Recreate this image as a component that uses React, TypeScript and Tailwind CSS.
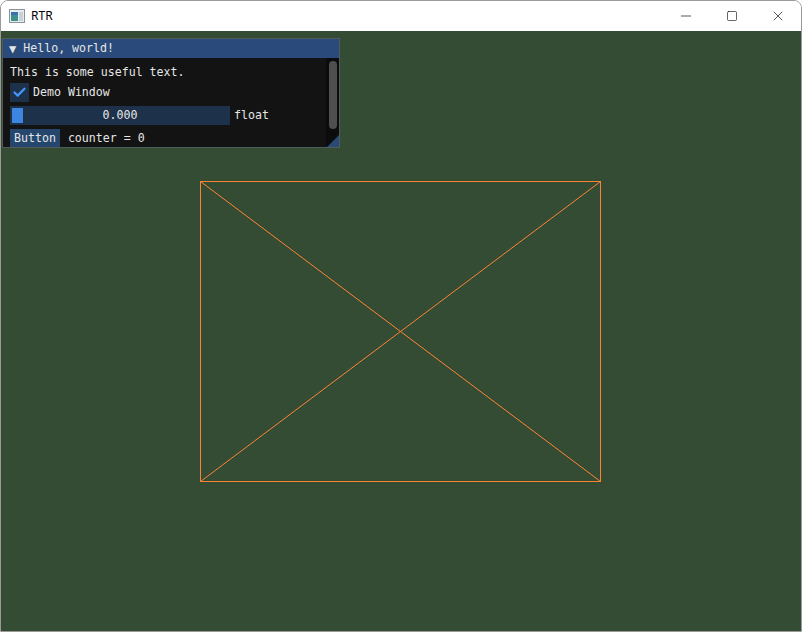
import { Check, Minus, Square, X } from "lucide-react"

const mono = { fontFamily: '"DejaVu Sans Mono", "Liberation Mono", monospace' }

function AppIcon() {
  return (
    <svg width="16" height="14" viewBox="0 0 16 14">
      <rect x="0.5" y="0.5" width="15" height="13" fill="#e8ecef" stroke="#8a9399" />
      <rect x="2" y="3" width="7" height="9" fill="#3f8f8c" />
      <rect x="2" y="3" width="7" height="3" fill="#3b6fb0" />
      <rect x="10" y="3" width="4" height="9" fill="#c7d2d8" />
    </svg>
  )
}

function ImguiWindow() {
  return (
    <div
      className="absolute left-[1px] top-[7px] w-[338px] h-[110px] border border-[#515c5a] bg-[#121312] text-[#e6e6e6] text-[11.6px] leading-[13px] overflow-hidden"
      style={mono}
    >
      {/* title */}
      <div className="h-[19px] bg-[#294a7a] flex items-center gap-[7px] pl-[6px]">
        <span className="text-[12px] leading-none">▼</span>
        <span>Hello, world!</span>
      </div>

      <div className="flex">
        <div className="flex-1 flex flex-col gap-[4px] pl-[7px] pt-[8px]">
          <div>This is some useful text.</div>
          <div className="flex items-center gap-[4px]">
            <div className="w-[19px] h-[19px] bg-[#1e314a] flex items-center justify-center">
              <Check size={15} strokeWidth={3.5} color="#4296fa" />
            </div>
            <span>Demo Window</span>
          </div>
          <div className="flex items-center gap-[4px]">
            <div className="relative w-[220px] h-[19px] bg-[#1e314a] flex items-center justify-center">
              <div className="absolute left-[2px] top-[2px] w-[11px] h-[15px] bg-[#3d85e0]" />
              <span>0.000</span>
            </div>
            <span>float</span>
          </div>
          <div className="flex items-center gap-[8px]">
            <div className="h-[19px] px-[4px] bg-[#25476e] flex items-center">Button</div>
            <span>counter = 0</span>
          </div>
        </div>

        {/* scrollbar */}
        <div className="w-[13px] h-[90px] bg-[#0b0c0b] pt-[3px] flex justify-center">
          <div className="w-[8px] h-[68px] rounded-full bg-[#4f4f4f]" />
        </div>
      </div>

      <svg className="absolute right-0 bottom-0" width="12" height="12" viewBox="0 0 12 12">
        <polygon points="12,0 12,12 0,12" fill="#294a75" />
      </svg>
    </div>
  )
}

export default function App() {
  return (
    <div className="w-[802px] h-[632px] flex flex-col overflow-hidden rounded-t-[8px] border border-[#9a9a9a] bg-white">
      {/* title bar */}
      <div className="h-[30px] flex items-center bg-white shrink-0">
        <div className="pl-[8px] pr-[6px] flex items-center">
          <AppIcon />
        </div>
        <span className="text-[12px] text-black" style={{ fontFamily: '"Noto Sans", "Liberation Sans", sans-serif' }}>
          RTR
        </span>
        <div className="ml-auto flex h-full">
          <div className="w-[46px] flex items-center justify-center">
            <Minus size={16} strokeWidth={1} color="#000" />
          </div>
          <div className="w-[46px] flex items-center justify-center">
            <Square size={12} strokeWidth={1.2} color="#000" />
          </div>
          <div className="w-[46px] flex items-center justify-center">
            <X size={16} strokeWidth={1} color="#000" />
          </div>
        </div>
      </div>

      {/* client area */}
      <div className="relative flex-1 bg-[#344b34]">
        <svg className="absolute inset-0" width="800" height="601" viewBox="0 0 800 601">
          <g stroke="#fb8434" strokeWidth="1" fill="none" shapeRendering="crispEdges">
            <rect x="199.5" y="150.5" width="400" height="300" />
            <line x1="199.5" y1="150.5" x2="599.5" y2="450.5" shapeRendering="auto" />
            <line x1="599.5" y1="150.5" x2="199.5" y2="450.5" shapeRendering="auto" />
          </g>
        </svg>
        <ImguiWindow />
      </div>
    </div>
  )
}
